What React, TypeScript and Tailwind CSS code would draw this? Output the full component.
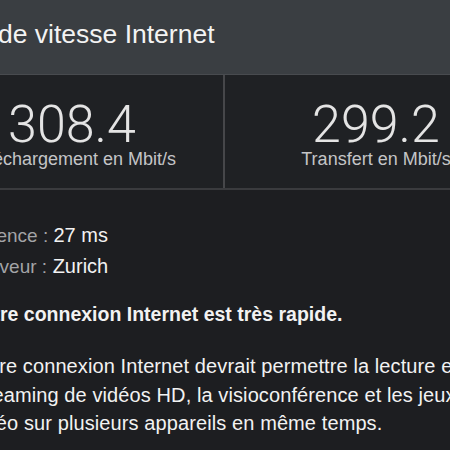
export default function App() {
  return (
    <div className="w-[450px] h-[450px] overflow-hidden bg-[#1d1e21] font-['Liberation_Sans',Arial,sans-serif]">
      <div className="w-[720px] -ml-[79px]">
        {/* nav bar */}
        <header className="h-[75px] bg-[#3a3e42] border-b border-[#484b4f] pt-[21px] pl-[21px]">
          <h1 className="text-[26.5px] leading-none text-[#f3f3f3]">Test de vitesse Internet</h1>
        </header>

        {/* results */}
        <div className="flex h-[115px] bg-[#1f2124] border-b-2 border-[#3a3b3e]">
          <div className="w-[304px] border-r-2 border-[#46474a] pt-[24px] text-center">
            <div className="font-['Roboto',sans-serif] font-light text-[52px] leading-[52px] text-[#e4e4e4]">308.4</div>
            <div className="-mt-[1px] text-[18px] leading-[18px] text-[#c4c5c7]">Téléchargement en Mbit/s</div>
          </div>
          <div className="w-[302px] pt-[24px] text-center">
            <div className="font-['Roboto',sans-serif] font-light text-[52px] leading-[52px] text-[#e4e4e4]">299.2</div>
            <div className="-mt-[1px] text-[18px] leading-[18px] text-[#c4c5c7]">Transfert en Mbit/s</div>
          </div>
        </div>

        <div className="pl-[49px] pt-[30px] text-[#f2f2f2]">
          <p className="text-[20px] leading-[30px]">
            <span className="text-[19px] text-[#a3a4a7]">Latence : </span>27 ms
          </p>
          <p className="text-[20px] leading-[30px]">
            <span className="text-[19px] text-[#a3a4a7]">Serveur :</span> Zurich
          </p>

          <p className="mt-[17px] text-[19.5px] leading-[30px] font-bold">
            Votre connexion Internet est très rapide.
          </p>

          <p className="mt-[23px] w-[510px] text-[20px] leading-[28.5px] tracking-[0.1px]">
            Votre connexion Internet devrait permettre la lecture en streaming de vidéos HD, la
            visioconférence et les jeux vidéo sur plusieurs appareils en même temps.
          </p>
        </div>
      </div>
    </div>
  );
}
